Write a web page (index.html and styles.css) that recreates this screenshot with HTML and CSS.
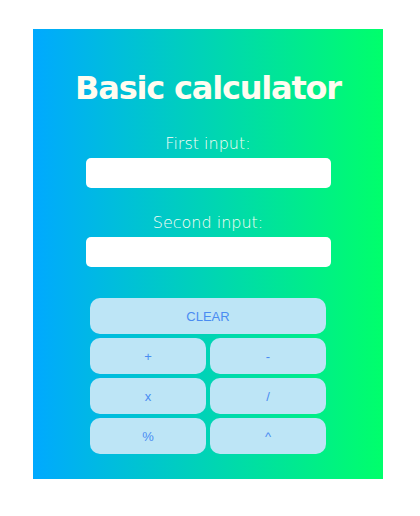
FILE: index.html
```html
<!DOCTYPE html>
<html>
<head>
<meta charset="utf-8">
<link rel="stylesheet" href="styles.css">
</head>
<body>
<div class="calc">
  <h1 class="title">Basic calculator</h1>
  <label class="label" for="a">First input:</label>
  <input class="field" id="a" type="text">
  <label class="label second" for="b">Second input:</label>
  <input class="field" id="b" type="text">
  <div class="pad">
    <button class="btn wide">CLEAR</button>
    <button class="btn">+</button>
    <button class="btn">-</button>
    <button class="btn">x</button>
    <button class="btn">/</button>
    <button class="btn">%</button>
    <button class="btn">^</button>
  </div>
</div>
</body>
</html>
```
FILE: styles.css
```css
html, body {
  margin: 0;
  padding: 0;
  background: #ffffff;
}
body {
  padding: 29px 0 0 33px;
}
.calc {
  width: 350px;
  height: 450px;
  box-sizing: border-box;
  padding-top: 39px;
  background: linear-gradient(to right, #00a9ff, #00ff6b);
  display: flex;
  flex-direction: column;
  align-items: center;
  font-family: "DejaVu Sans", sans-serif;
}
.title {
  margin: 0;
  font-size: 32px;
  line-height: 40px;
  font-weight: bold;
  color: #fffcf0;
  letter-spacing: -1.2px;
}
.label {
  margin-top: 26px;
  font-size: 16px;
  line-height: 20px;
  font-weight: 300;
  color: #fbfdf6;
}
.label.second {
  margin-top: 25px;
}
.field {
  margin-top: 4px;
  width: 245px;
  height: 30px;
  box-sizing: border-box;
  border: none;
  border-radius: 5px;
  background: #ffffff;
  padding: 0 8px;
}
.pad {
  margin-top: 31px;
  width: 236px;
  display: grid;
  grid-template-columns: 1fr 1fr;
  gap: 4px;
}
.btn {
  height: 36px;
  border: none;
  border-radius: 10px;
  background: #bde5f6;
  color: #4a8cf2;
  font-family: "Liberation Sans", Arial, sans-serif;
  font-size: 13px;
  padding: 0;
}
.btn.wide {
  grid-column: 1 / 3;
}
```
